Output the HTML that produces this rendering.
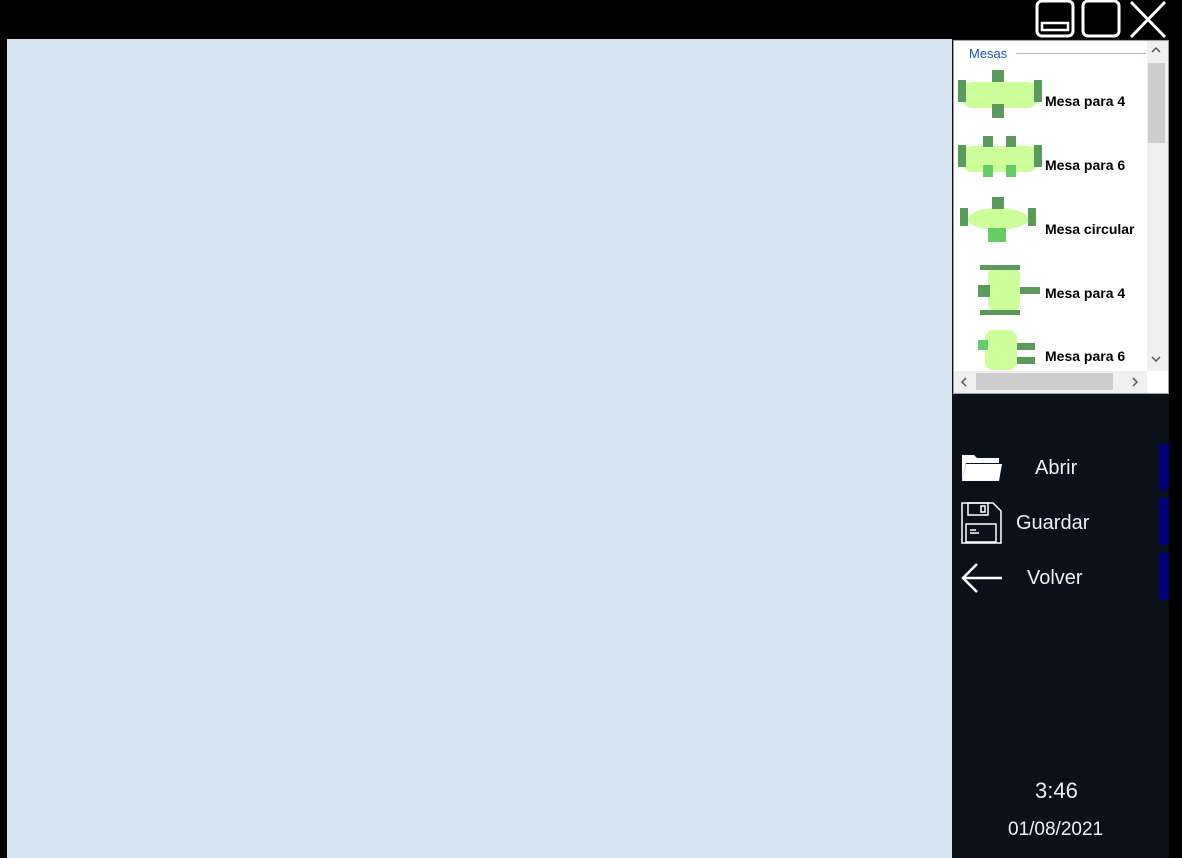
<!DOCTYPE html>
<html><head><meta charset="utf-8"><style>
*{margin:0;padding:0;box-sizing:border-box}
body{width:1182px;height:858px;background:#000;position:relative;overflow:hidden;font-family:"Liberation Sans",sans-serif}
.a{position:absolute}
.item{position:absolute;left:1045px;font-weight:bold;font-size:14px;color:#000}
.btn{position:absolute;color:#f0f0f0;font-size:20px}
.bar{position:absolute;left:1159px;width:10px;background:#00007a}
.c{position:absolute;background:#5a9a5a}
.g{position:absolute;background:#66cc66}
</style></head><body>
<div class="a" style="left:7px;top:39px;width:945px;height:819px;background:#d6e4f0"></div>
<div class="a" style="left:952px;top:39px;width:217px;height:819px;background:#0a111b"></div>
<svg class="a" style="left:1030px;top:0" width="152" height="39" viewBox="0 0 152 39" fill="none" stroke="#fff" stroke-width="3">
<rect x="7" y="1" width="36" height="35" rx="5"/><rect x="12" y="23" width="26" height="7" stroke-width="2.5"/>
<rect x="53" y="1" width="36" height="35" rx="5"/>
<path d="M101 2 L135 37 M135 2 L101 37"/>
</svg>
<div class="a" style="left:953px;top:40px;width:216px;height:354px;background:#fff;border:1px solid #a0a0a0"></div>
<div class="a" style="left:969px;top:46px;font-size:13px;color:#2050c0">Mesas</div>
<div class="a" style="left:1016px;top:53px;width:130px;height:1px;background:#a8b8e0"></div>
<div class="a" style="left:1147px;top:41px;width:21px;height:330px;background:#f0f0f0"></div>
<div class="a" style="left:1148px;top:63px;width:17px;height:80px;background:#cdcdcd"></div>
<svg class="a" style="left:1150px;top:46px" width="12" height="8"><path d="M2 6l4-4 4 4" stroke="#555" stroke-width="1.5" fill="none"/></svg>
<svg class="a" style="left:1150px;top:355px" width="12" height="8"><path d="M2 2l4 4 4-4" stroke="#555" stroke-width="1.5" fill="none"/></svg>
<div class="a" style="left:954px;top:371px;width:193px;height:22px;background:#f0f0f0"></div>
<div class="a" style="left:976px;top:373px;width:137px;height:17px;background:#cdcdcd"></div>
<svg class="a" style="left:960px;top:376px" width="8" height="12"><path d="M6 2l-4 4 4 4" stroke="#555" stroke-width="1.5" fill="none"/></svg>
<svg class="a" style="left:1131px;top:376px" width="8" height="12"><path d="M2 2l4 4-4 4" stroke="#555" stroke-width="1.5" fill="none"/></svg>
<!-- table icons -->
<div class="a" style="left:962px;top:82px;width:76px;height:26px;background:#ccff99;border-radius:10px"></div>
<div class="c" style="left:992px;top:70px;width:12px;height:12px"></div>
<div class="c" style="left:992px;top:104px;width:12px;height:14px"></div>
<div class="c" style="left:958px;top:80px;width:8px;height:22px"></div>
<div class="c" style="left:1034px;top:80px;width:8px;height:22px"></div>
<div class="a" style="left:962px;top:146px;width:76px;height:26px;background:#ccff99;border-radius:10px"></div>
<div class="c" style="left:983px;top:136px;width:10px;height:11px"></div>
<div class="c" style="left:1006px;top:136px;width:10px;height:11px"></div>
<div class="g" style="left:983px;top:165px;width:10px;height:12px"></div>
<div class="g" style="left:1006px;top:165px;width:10px;height:12px"></div>
<div class="c" style="left:958px;top:145px;width:8px;height:22px"></div>
<div class="c" style="left:1034px;top:145px;width:8px;height:22px"></div>
<div class="a" style="left:968px;top:208px;width:60px;height:22px;background:#ccff99;border-radius:50%"></div>
<div class="c" style="left:992px;top:197px;width:12px;height:12px"></div>
<div class="g" style="left:988px;top:228px;width:18px;height:14px"></div>
<div class="c" style="left:960px;top:208px;width:8px;height:18px"></div>
<div class="c" style="left:1028px;top:208px;width:8px;height:18px"></div>
<div class="a" style="left:988px;top:267px;width:32px;height:44px;background:#ccff99;border-radius:8px"></div>
<div class="c" style="left:1020px;top:287px;width:20px;height:7px"></div>
<div class="c" style="left:978px;top:285px;width:12px;height:12px"></div>
<div class="c" style="left:980px;top:265px;width:40px;height:5px"></div>
<div class="c" style="left:980px;top:310px;width:40px;height:5px"></div>
<div class="a" style="left:985px;top:330px;width:32px;height:40px;background:#ccff99;border-radius:8px"></div>
<div class="c" style="left:1017px;top:343px;width:18px;height:7px"></div>
<div class="c" style="left:1017px;top:357px;width:18px;height:7px"></div>
<div class="g" style="left:978px;top:340px;width:10px;height:10px"></div>
<div class="item" style="top:93px">Mesa para 4</div>
<div class="item" style="top:157px">Mesa para 6</div>
<div class="item" style="top:221px">Mesa circular</div>
<div class="item" style="top:285px">Mesa para 4</div>
<div class="item" style="top:348px">Mesa para 6</div>
<div class="bar" style="top:444px;height:46px"></div>
<div class="bar" style="top:498px;height:47px"></div>
<div class="bar" style="top:553px;height:47px"></div>
<svg class="a" style="left:960px;top:453px" width="44" height="30" viewBox="0 0 44 30"><path d="M2 2h12l3 3h22v5H6l-4 18z" fill="#fff"/><path d="M6 11h36l-3 17H2z" fill="#fff"/></svg>
<svg class="a" style="left:961px;top:502px" width="42" height="42" viewBox="0 0 42 42" fill="none" stroke="#fff" stroke-width="1.5"><path d="M1 1h31l8 8v32H1z"/><rect x="7" y="1" width="20" height="12"/><rect x="20" y="4" width="4" height="6"/><rect x="5" y="22" width="30" height="18"/><path d="M9 28h6M9 31h9"/></svg>
<svg class="a" style="left:960px;top:562px" width="44" height="32" viewBox="0 0 44 32" fill="none" stroke="#fff" stroke-width="2.5"><path d="M42 16H3M17 2L3 16l14 14"/></svg>
<div class="btn" style="left:1035px;top:457px">Abrir</div>
<div class="btn" style="left:1016px;top:512px">Guardar</div>
<div class="btn" style="left:1027px;top:567px">Volver</div>
<div class="a" style="left:1035px;top:778px;color:#f0f0f0;font-size:22px">3:46</div>
<div class="a" style="left:1008px;top:819px;color:#f0f0f0;font-size:19px">01/08/2021</div>
</body></html>
